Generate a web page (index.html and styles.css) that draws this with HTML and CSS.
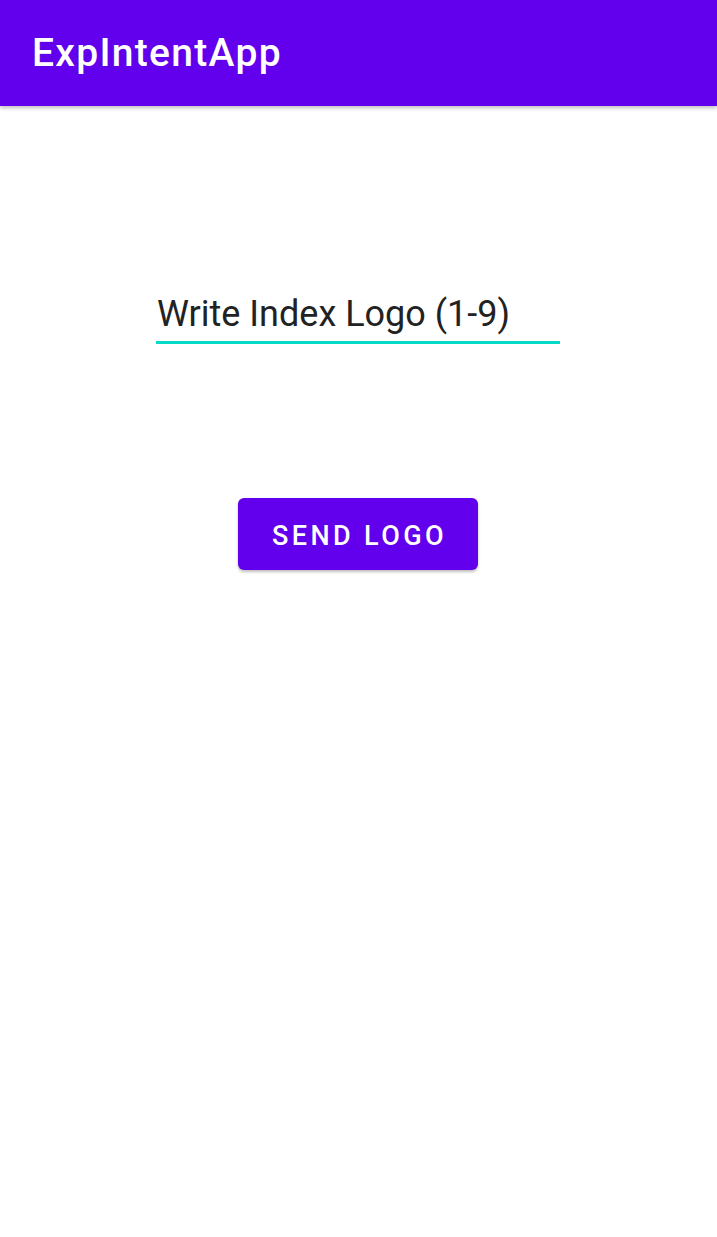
FILE: index.html
```html
<!DOCTYPE html>
<html>
<head>
<meta charset="utf-8">
<link rel="stylesheet" href="styles.css">
</head>
<body>
<header class="appbar"><h1 class="title">ExpIntentApp</h1></header>
<main class="content">
  <div class="field"><span class="field-text">Write Index Logo (1-9)</span></div>
  <button class="btn">SEND LOGO</button>
</main>
</body>
</html>
```
FILE: styles.css
```css
html, body { margin: 0; padding: 0; background: #fff; }
body { font-family: Roboto, "Noto Sans", sans-serif; width: 717px; height: 1237px; overflow: hidden; }
.appbar {
  height: 106px;
  background: #6200EE;
  box-shadow: 0 2px 4px rgba(0,0,0,0.25);
  display: flex;
  align-items: center;
  padding-left: 32px;
  position: relative;
  z-index: 1;
}
.title {
  margin: 0;
  color: #fff;
  font-weight: 500;
  font-size: 39px;
  line-height: 1;
  letter-spacing: 1.3px;
  margin-top: 1px;
}
.content {
  display: flex;
  flex-direction: column;
  align-items: center;
  padding-top: 186px;
}
.field {
  width: 404px;
  border-bottom: 3px solid #03DAC5;
  padding-bottom: 5px;
  box-sizing: border-box;
  margin-right: 1px;
}
.field-text {
  display: block;
  padding-left: 1px;
  font-size: 36px;
  line-height: 44px;
  color: #222;
  letter-spacing: 0;
}
.btn {
  margin-top: 154px;
  width: 240px;
  height: 72px;
  border: none;
  border-radius: 6px;
  background: #6200EE;
  color: #fff;
  font-family: Roboto, sans-serif;
  font-weight: 500;
  font-size: 27px;
  letter-spacing: 3.4px;
  text-indent: 3px;
  box-shadow: 0 2px 3px rgba(0,0,0,0.25);
  padding: 3px 0 0;
  margin-right: 1px;
}
```
